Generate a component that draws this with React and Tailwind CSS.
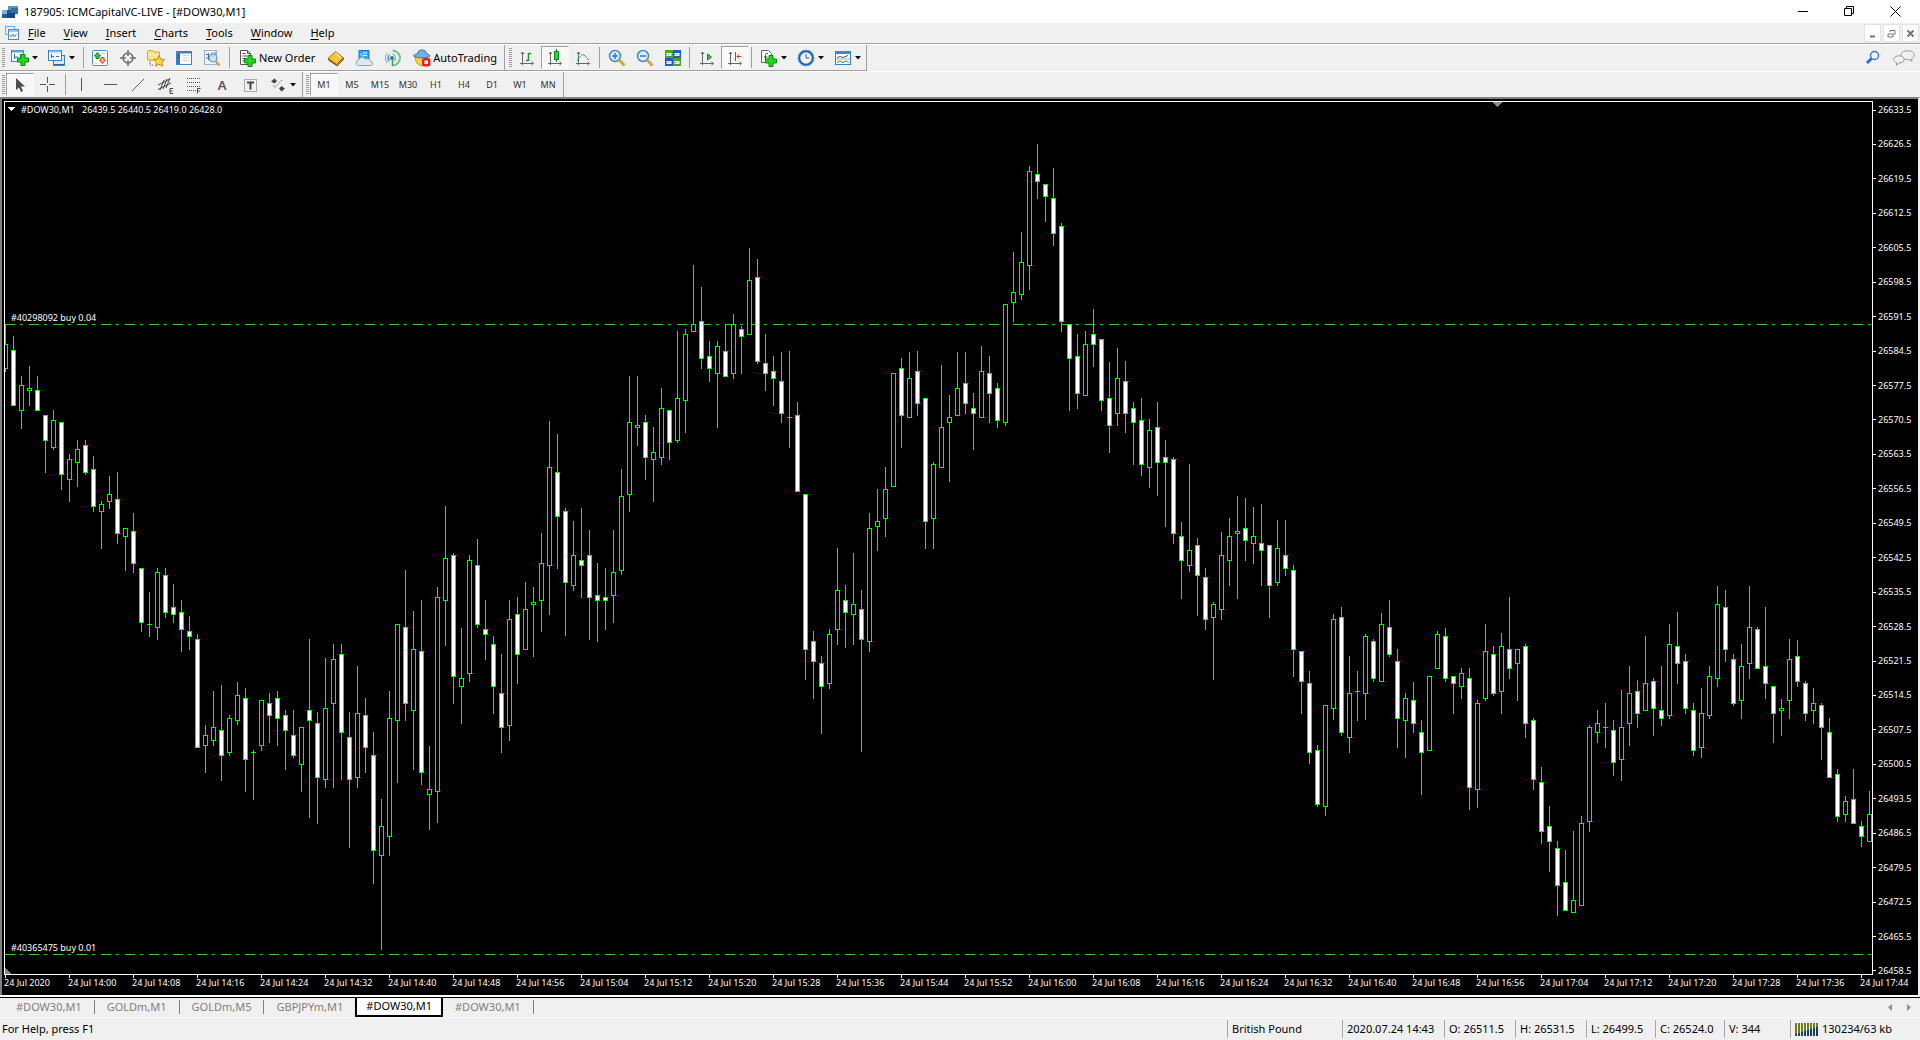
import clsx from 'clsx';

const MENUS = ['File', 'View', 'Insert', 'Charts', 'Tools', 'Window', 'Help'];

const TIMEFRAMES = ['M1', 'M5', 'M15', 'M30', 'H1', 'H4', 'D1', 'W1', 'MN'];

const TABS = ['#DOW30,M1', 'GOLDm,M1', 'GOLDm,M5', 'GBPJPYm,M1', '#DOW30,M1', '#DOW30,M1'];
const ACTIVE_TAB = 4;

const PRICES = Array.from({ length: 26 }, (_, i) => (26633.5 - i * 7).toFixed(1));

// one label every 8 minutes, the first one carries the year
const TIMES = Array.from({ length: 30 }, (_, i) => {
  if (i === 0) return '24 Jul 2020';
  const minutes = 14 * 60 + (i - 1) * 8;
  const mm = String(minutes % 60).padStart(2, '0');
  return `24 Jul ${Math.floor(minutes / 60)}:${mm}`;
});

const ORDERS = [
  { label: '#40298092 buy 0.04', y: 324 },
  { label: '#40365475 buy 0.01', y: 954 }
];

const UP = 0;
const DOWN = 1;

// [direction, high, body top, body bottom, low]
const CANDLES = [
  [UP, 324, 344, 369, 372], [DOWN, 336, 350, 406, 406], [UP, 376, 385, 411, 429],
  [UP, 366, 388, 391, 406], [DOWN, 376, 390, 411, 411], [DOWN, 415, 415, 441, 473],
  [UP, 410, 420, 448, 450], [DOWN, 422, 422, 475, 490], [UP, 454, 459, 480, 502],
  [UP, 440, 449, 463, 487], [DOWN, 440, 445, 473, 475], [DOWN, 456, 469, 507, 512],
  [UP, 501, 504, 512, 549], [UP, 476, 494, 502, 509], [DOWN, 472, 499, 534, 544],
  [UP, 528, 528, 537, 571], [DOWN, 513, 531, 564, 573], [DOWN, 568, 568, 623, 632],
  [UP, 592, 624, 625, 637], [UP, 568, 572, 628, 640], [DOWN, 568, 575, 613, 618],
  [DOWN, 584, 607, 615, 623], [DOWN, 600, 612, 630, 652], [DOWN, 616, 631, 637, 650],
  [DOWN, 634, 639, 748, 748], [UP, 725, 735, 746, 773], [UP, 691, 727, 741, 746],
  [DOWN, 685, 730, 756, 781], [UP, 715, 718, 753, 756], [UP, 682, 695, 721, 725],
  [DOWN, 688, 698, 760, 792], [UP, 750, 752, 753, 800], [UP, 700, 700, 746, 751],
  [DOWN, 693, 703, 716, 743], [DOWN, 691, 698, 719, 746], [DOWN, 710, 715, 731, 770],
  [DOWN, 710, 735, 756, 758], [UP, 727, 727, 765, 792], [DOWN, 639, 710, 721, 818],
  [DOWN, 712, 723, 778, 824], [UP, 658, 708, 780, 788], [UP, 644, 659, 704, 788],
  [DOWN, 644, 654, 733, 780], [DOWN, 712, 737, 780, 848], [UP, 666, 713, 778, 788],
  [DOWN, 698, 715, 748, 773], [DOWN, 732, 755, 851, 884], [UP, 799, 826, 856, 950],
  [UP, 691, 718, 837, 856], [UP, 624, 624, 721, 783], [DOWN, 570, 627, 704, 721],
  [UP, 611, 649, 711, 770], [DOWN, 600, 651, 773, 785], [UP, 746, 789, 795, 830],
  [UP, 587, 597, 792, 823], [UP, 506, 558, 601, 646], [DOWN, 553, 555, 677, 704],
  [UP, 628, 678, 687, 724], [UP, 555, 560, 674, 682], [DOWN, 539, 565, 625, 628],
  [DOWN, 600, 629, 635, 660], [DOWN, 636, 644, 687, 714], [DOWN, 654, 693, 728, 753],
  [UP, 600, 619, 726, 741], [DOWN, 597, 614, 655, 684], [UP, 582, 609, 650, 650],
  [UP, 587, 602, 605, 657], [UP, 533, 563, 601, 632], [UP, 421, 467, 566, 615],
  [DOWN, 434, 472, 517, 569], [DOWN, 508, 511, 583, 636], [UP, 521, 555, 586, 591],
  [DOWN, 508, 560, 566, 598], [DOWN, 530, 555, 598, 640], [DOWN, 563, 595, 601, 642],
  [DOWN, 568, 597, 601, 630], [UP, 530, 572, 596, 623], [UP, 469, 496, 571, 575],
  [UP, 376, 422, 495, 512], [UP, 376, 425, 428, 446], [DOWN, 415, 422, 458, 480],
  [UP, 427, 452, 460, 502], [UP, 388, 408, 458, 465], [DOWN, 410, 410, 443, 460],
  [UP, 331, 398, 441, 443], [UP, 329, 334, 401, 433], [UP, 265, 324, 332, 332],
  [DOWN, 287, 321, 359, 369], [DOWN, 341, 356, 369, 382], [UP, 341, 346, 374, 428],
  [DOWN, 324, 351, 377, 377], [UP, 314, 324, 374, 379], [DOWN, 326, 329, 337, 374],
  [UP, 248, 280, 335, 335], [DOWN, 259, 277, 362, 364], [DOWN, 334, 363, 374, 391],
  [DOWN, 356, 371, 379, 406], [DOWN, 352, 381, 414, 423], [UP, 351, 417, 418, 448],
  [DOWN, 402, 415, 492, 492], [DOWN, 494, 494, 650, 680], [DOWN, 631, 641, 662, 699],
  [DOWN, 656, 663, 687, 734], [UP, 629, 634, 684, 689], [UP, 548, 590, 630, 645],
  [DOWN, 585, 600, 613, 648], [UP, 553, 604, 615, 645], [DOWN, 590, 609, 640, 752],
  [UP, 513, 528, 642, 652], [UP, 489, 521, 527, 551], [UP, 467, 489, 519, 537],
  [UP, 373, 373, 487, 487], [DOWN, 358, 368, 416, 448], [UP, 352, 378, 418, 418],
  [DOWN, 351, 371, 404, 416], [DOWN, 398, 398, 522, 549], [UP, 462, 464, 519, 549],
  [UP, 365, 427, 468, 468], [UP, 395, 417, 423, 482], [UP, 352, 388, 416, 416],
  [DOWN, 352, 383, 404, 414], [DOWN, 393, 408, 414, 450], [UP, 346, 371, 418, 418],
  [DOWN, 356, 373, 394, 423], [DOWN, 383, 388, 421, 428], [UP, 304, 304, 423, 426],
  [UP, 252, 292, 303, 322], [UP, 232, 262, 295, 300], [UP, 166, 171, 266, 290],
  [DOWN, 144, 174, 182, 199], [DOWN, 184, 184, 197, 222], [DOWN, 168, 198, 234, 246],
  [DOWN, 223, 226, 322, 332], [DOWN, 324, 324, 359, 411], [DOWN, 334, 356, 394, 409],
  [UP, 331, 344, 396, 396], [DOWN, 309, 334, 345, 367], [DOWN, 339, 339, 401, 411],
  [DOWN, 362, 398, 426, 453], [UP, 348, 378, 414, 426], [DOWN, 361, 381, 414, 433],
  [DOWN, 402, 408, 423, 465], [DOWN, 398, 420, 465, 476], [UP, 419, 430, 468, 488],
  [DOWN, 402, 427, 463, 496], [DOWN, 440, 457, 463, 527], [DOWN, 457, 459, 534, 544],
  [DOWN, 522, 536, 561, 599], [UP, 464, 550, 566, 572], [DOWN, 538, 545, 576, 616],
  [DOWN, 568, 577, 620, 630], [UP, 602, 604, 618, 680], [UP, 532, 555, 610, 620],
  [UP, 518, 536, 561, 586], [UP, 496, 531, 534, 599], [DOWN, 498, 528, 541, 561],
  [UP, 507, 536, 544, 564], [DOWN, 504, 543, 551, 586], [DOWN, 545, 545, 586, 618],
  [UP, 520, 548, 583, 586], [DOWN, 520, 555, 569, 576], [DOWN, 565, 570, 650, 677],
  [DOWN, 651, 651, 682, 714], [DOWN, 671, 683, 753, 764], [DOWN, 745, 750, 805, 807],
  [UP, 705, 705, 807, 816], [UP, 614, 619, 709, 720], [DOWN, 607, 617, 733, 736],
  [UP, 656, 693, 738, 753], [UP, 671, 691, 692, 721], [UP, 634, 636, 694, 720],
  [DOWN, 639, 641, 679, 682], [UP, 613, 624, 682, 682], [DOWN, 600, 627, 655, 657],
  [DOWN, 649, 661, 719, 748], [UP, 693, 698, 721, 758], [DOWN, 682, 700, 724, 733],
  [DOWN, 720, 732, 753, 795], [UP, 676, 676, 751, 751], [UP, 631, 634, 669, 669],
  [DOWN, 628, 636, 679, 682], [DOWN, 676, 676, 684, 714], [UP, 668, 673, 687, 699],
  [DOWN, 668, 678, 788, 810], [UP, 700, 703, 790, 808], [UP, 624, 651, 699, 701],
  [DOWN, 646, 654, 694, 696], [UP, 633, 646, 692, 714], [DOWN, 597, 649, 669, 679],
  [UP, 649, 649, 664, 701], [DOWN, 644, 646, 724, 738], [DOWN, 718, 720, 780, 790],
  [DOWN, 767, 782, 832, 844], [DOWN, 806, 826, 842, 872], [DOWN, 841, 848, 886, 916],
  [DOWN, 850, 882, 911, 911], [UP, 831, 900, 913, 913], [UP, 816, 823, 906, 906],
  [UP, 725, 727, 822, 832], [UP, 710, 723, 733, 743], [UP, 703, 727, 728, 748],
  [DOWN, 720, 730, 763, 776], [UP, 690, 727, 760, 781], [UP, 666, 693, 724, 746],
  [DOWN, 680, 691, 714, 728], [UP, 636, 683, 711, 711], [DOWN, 678, 681, 709, 736],
  [DOWN, 666, 710, 719, 726], [UP, 624, 644, 716, 719], [DOWN, 612, 646, 664, 684],
  [DOWN, 654, 661, 709, 714], [DOWN, 703, 710, 751, 756], [UP, 688, 713, 748, 758],
  [UP, 666, 676, 716, 719], [UP, 586, 604, 679, 687], [DOWN, 590, 607, 650, 662],
  [DOWN, 654, 659, 704, 706], [UP, 644, 666, 701, 719], [UP, 586, 627, 664, 679],
  [DOWN, 627, 629, 669, 669], [DOWN, 607, 666, 684, 699], [DOWN, 686, 686, 714, 743],
  [UP, 699, 708, 711, 736], [UP, 639, 659, 701, 719], [DOWN, 640, 656, 682, 687],
  [DOWN, 681, 683, 714, 721], [UP, 688, 703, 711, 724], [DOWN, 703, 705, 728, 760],
  [DOWN, 718, 732, 778, 778], [DOWN, 769, 774, 817, 822], [UP, 796, 801, 815, 822],
  [DOWN, 769, 799, 824, 824], [DOWN, 821, 826, 837, 847], [UP, 791, 814, 842, 842]
];

function Svg({ children, size = 18 }) {
  return (
    <svg width={size} height={size} viewBox={`0 0 ${size} ${size}`} fill="none" className="shrink-0">
      {children}
    </svg>
  );
}

function GreenPlus({ x, y }) {
  return (
    <path
      d="M4 0.5h4v3.5h3.5v4H8v3.5H4V8H0.5V4H4z"
      transform={`translate(${x} ${y})`}
      fill="#1fd81f"
      stroke="#0a8a0a"
    />
  );
}

function Axes() {
  return (
    <path d="M4.5 3v13M3 5l1.500-2 1.500 2M2 14.500h13M13.500 13l2 1.500-2 1.500" stroke="#666" />
  );
}

const icons = {
  newChart: (
    <Svg>
      <rect x="0.5" y="1.5" width="12" height="11" fill="#f4f9ff" stroke="#4a86c5" />
      <path d="M1 2.5h11" stroke="#6aa2dc" strokeWidth="2" />
      <path d="M3.5 5v5M3 8h4M9.5 5v4" stroke="#3b70a8" />
      <GreenPlus x={6} y={5} />
    </Svg>
  ),
  profiles: (
    <Svg>
      <rect x="5.5" y="6.5" width="11" height="10" fill="#d7e9fb" stroke="#3c7fc4" />
      <path d="M6 15.500h10" stroke="#2c68a8" />
      <rect x="0.5" y="1.5" width="13" height="10" fill="#f4f9ff" stroke="#3c7fc4" />
      <path d="M1 2.5h12" stroke="#8cbdec" strokeWidth="2" />
      <path d="M3.500 5v4M3 7.500h3M8 7.500h3" stroke="#3b70a8" />
    </Svg>
  ),
  marketWatch: (
    <Svg>
      <rect x="1.500" y="1.500" width="15" height="15" rx="1" fill="#fff" stroke="#4e8fd0" />
      <path d="M11 4.500h3M4 14.500h2" stroke="#a9c9e8" />
      <path d="M6.500 3.500l3 3.500H8v2.500H5V7H3.500z" fill="#2fd23a" stroke="#0c8a14" />
      <path d="M11.500 14.500l-3-3.500H10V8.500h3V11h1.500z" fill="#ffb28a" stroke="#e0430e" />
    </Svg>
  ),
  crosshair: (
    <Svg>
      <circle cx="9" cy="9" r="5" stroke="#6e6e6e" strokeWidth="1.500" />
      <path d="M9 1v6M9 11v6M1 9h6M11 9h6" stroke="#6e6e6e" strokeWidth="1.500" />
    </Svg>
  ),
  navigator: (
    <Svg>
      <path d="M0.500 11V3l1-1.500h4L7 3h5.500v8z" fill="#fbe28a" stroke="#d9a62a" />
      <path d="M1 6h11" stroke="#fff3bf" />
      <path d="M3 12v4M3 16h4" stroke="#555" strokeDasharray="1 1" />
      <path d="M12 6.500l1.700 3.700 3.800.4-2.800 2.700.8 3.900-3.500-2-3.500 2 .8-3.900-2.800-2.700 3.800-.4z" fill="#ffd84a" stroke="#c98d12" />
    </Svg>
  ),
  terminal: (
    <Svg>
      <rect x="1.500" y="2.500" width="15" height="13" fill="#fff" stroke="#3f7fc9" />
      <path d="M1 3.500h16" stroke="#3f7fc9" strokeWidth="2" />
      <rect x="2" y="4" width="3" height="11" fill="#3a76c8" />
      <path d="M7.500 6.500h7M7.500 9h7M7.500 11.500h7" stroke="#cfd9e6" />
      <path d="M3.500 5.500v1M3.500 8v1" stroke="#16345f" />
    </Svg>
  ),
  tester: (
    <Svg>
      <rect x="1.500" y="1.500" width="12" height="14" fill="#edf4fb" stroke="#9ab4cd" />
      <path d="M3 5.500h2.500v3.500H3M5.500 11V4M9 3.500v5M12 3v3" stroke="#4c7197" />
      <circle cx="10" cy="9" r="4" fill="#bfe0fa" fillOpacity="0.8" stroke="#5b93c8" />
      <path d="M13 12.500l3.500 4" stroke="#dba436" strokeWidth="2.500" />
    </Svg>
  ),
  newOrder: (
    <Svg>
      <path d="M1.500 1.500h7l3 3v11h-10z" fill="#fff" stroke="#555" />
      <path d="M8.500 1.500v3h3M3.500 4.500h3M3.500 7h5M3.500 9.500h4M3.500 12h3" stroke="#555" />
      <GreenPlus x={5} y={6} />
    </Svg>
  ),
  book: (
    <Svg>
      <path d="M1 9.500L8.500 2.500l8 6.500-7 6.500z" fill="#f4c542" stroke="#a9700f" />
      <path d="M1 9.500l1 2 8 5.500 6.500-6.500V9l-7 6.500z" fill="#d99a25" stroke="#8f5d0b" />
      <path d="M8.500 4l5 4.500" stroke="#fff2b3" strokeWidth="1.500" />
    </Svg>
  ),
  server: (
    <Svg>
      <path d="M4 1.500h10V10H4z" fill="#36a7f5" stroke="#1c75bf" />
      <path d="M5.500 4.500l2 3M8 4h4M8 6.500h4" stroke="#eaf7ff" />
      <path d="M3.500 16.500a2.800 2.800 0 010-5.500 4 4 0 017-1 3.500 3.500 0 015 2.500 2 2 0 010 4z" fill="#dfe7f2" stroke="#8aa0c0" />
    </Svg>
  ),
  signals: (
    <Svg>
      <circle cx="9" cy="9" r="7.500" fill="#e6eff0" />
      <path d="M4.500 14a7 7 0 010-10" stroke="#9dbfd0" strokeWidth="1.500" />
      <path d="M6.500 12a4 4 0 010-6" stroke="#4d8fc4" strokeWidth="1.500" />
      <path d="M9.500 1.500a7 7 0 010 15" stroke="#7cc08a" strokeWidth="2" />
      <path d="M9.500 5a4 4 0 011.500 7" stroke="#8cc79a" strokeWidth="1.500" />
      <circle cx="9" cy="9" r="2" fill="#2f78c0" />
      <path d="M9.500 10v7" stroke="#3da24a" strokeWidth="1.500" />
    </Svg>
  ),
  autoTrading: (
    <Svg>
      <path d="M2 8h13l-1.500 6-5 3-5-3z" fill="#f7cf4d" stroke="#c79a1e" />
      <path d="M0.500 7c1-2 3-2 4-2 .5-3 2-4 4.500-4s4 1 4.500 4c1 0 2.500 0 3.500 2-3 2.500-13 2.500-16.500 0z" fill="#6db4ea" stroke="#2d76b5" />
      <rect x="9" y="9" width="8.500" height="8.500" rx="2.500" fill="#e3241b" />
      <rect x="11.500" y="11.500" width="3.500" height="3.500" fill="#fff" />
    </Svg>
  ),
  bars: (
    <Svg>
      <Axes />
      <path d="M8 11.500h2.500M10.500 12V4M10.500 4.500H13" stroke="#1a9a2a" strokeWidth="1.500" />
    </Svg>
  ),
  candles: (
    <Svg>
      <Axes />
      <path d="M10.500 0v13" stroke="#0b8a1c" />
      <rect x="8.500" y="2.500" width="4" height="8" fill="#2fd24a" stroke="#0b8a1c" />
    </Svg>
  ),
  line: (
    <Svg>
      <Axes />
      <path d="M3 12c3-5 5-7 7-6s3 3.500 5 5" stroke="#2fa83f" />
    </Svg>
  ),
  zoomIn: (
    <Svg>
      <circle cx="7" cy="7" r="5.500" fill="#d9effc" stroke="#3f87c9" strokeWidth="1.500" />
      <path d="M4 7h6M7 4v6" stroke="#2f77bd" strokeWidth="1.500" />
      <path d="M11 11l5.500 5.500" stroke="#d9a431" strokeWidth="3" />
    </Svg>
  ),
  zoomOut: (
    <Svg>
      <circle cx="7" cy="7" r="5.500" fill="#d9effc" stroke="#3f87c9" strokeWidth="1.500" />
      <path d="M4 7h6" stroke="#2f77bd" strokeWidth="1.500" />
      <path d="M11 11l5.500 5.500" stroke="#d9a431" strokeWidth="3" />
    </Svg>
  ),
  tile: (
    <Svg>
      <rect x="1" y="1" width="8" height="8" fill="#4fa51c" />
      <rect x="9" y="1" width="8" height="8" fill="#2458cf" />
      <rect x="1" y="9" width="8" height="8" fill="#2458cf" />
      <rect x="9" y="9" width="8" height="8" fill="#4fa51c" />
      <path d="M2.500 5.500h5M10.500 5.500h5M2.500 13.500h5M10.500 13.500h5" stroke="#f3f8ff" strokeWidth="3" />
      <path d="M3 5.500h3M11 5.500h3M3 13.500h3M11 13.500h3" stroke="#9cc0e8" />
    </Svg>
  ),
  autoScroll: (
    <Svg>
      <Axes />
      <path d="M9.500 5v6l4-3z" fill="#38c84a" stroke="#128a22" />
    </Svg>
  ),
  chartShift: (
    <Svg>
      <Axes />
      <path d="M9.500 3v9" stroke="#2b6cab" />
      <path d="M15 7.500h-4M13 5.500l-2 2 2 2" stroke="#c8401a" />
    </Svg>
  ),
  indicators: (
    <Svg>
      <path d="M1.500 1.500h7l3 3v9h-10z" fill="#fff" stroke="#666" />
      <path d="M8 4.500c-2-.8-2.500.5-2.500 2v5M4 8h3.500" stroke="#444" />
      <GreenPlus x={5} y={6} />
    </Svg>
  ),
  clock: (
    <Svg>
      <circle cx="9" cy="9" r="7" fill="#eef6fd" stroke="#1b62b5" strokeWidth="2.500" />
      <circle cx="9" cy="9" r="7.800" stroke="#5fa6ea" strokeWidth="0.800" />
      <path d="M9 5v4h3.500" stroke="#555" />
    </Svg>
  ),
  templates: (
    <Svg>
      <rect x="1.500" y="2.500" width="15" height="13" fill="#fff" stroke="#3c7cc4" />
      <path d="M1 3.500h16" stroke="#3c86d6" strokeWidth="3" />
      <path d="M3 8.500l3-1 3 1 5-2" stroke="#a23a22" />
      <path d="M3 13.500l3-1.500 3 1.500 3-1.500 3 1.500" stroke="#2d9a3a" />
      <path d="M2 10h14" stroke="#8ab2db" />
    </Svg>
  ),
  cursor: (
    <Svg>
      <path d="M5 2v12l3-2.500 2 4.500 2-1-2-4.500h4z" fill="#4c4c4c" />
    </Svg>
  ),
  cross: (
    <Svg>
      <path d="M8.500 1v6M8.500 10v6M1 8.500h6M10 8.500h6" stroke="#555" />
    </Svg>
  ),
  vline: (
    <Svg>
      <path d="M8.500 2v13" stroke="#555" />
    </Svg>
  ),
  hline: (
    <Svg>
      <path d="M3 8.500h13" stroke="#555" />
    </Svg>
  ),
  trend: (
    <Svg>
      <path d="M3 15L15 3" stroke="#666" />
    </Svg>
  ),
  channel: (
    <Svg>
      <path d="M1 9l12-6M1 13.500L14 7M3 14l4-10M6 13l4-10M9 12l4-10" stroke="#444" />
      <path d="M16 12.500h-3v5h3M13 15h2.500" stroke="#444" />
    </Svg>
  ),
  fibo: (
    <Svg>
      <path d="M2 2.500h14M2 6.500h14M2 10.500h14M2 14.500h9" stroke="#555" strokeDasharray="1 1" />
      <path d="M12.500 17.500v-5h3M12.500 15h2.500" stroke="#444" />
    </Svg>
  ),
  label: (
    <Svg>
      <rect x="3.500" y="3.500" width="12" height="12" stroke="#666" strokeDasharray="1 1" />
      <path d="M6 6.500h7M9.500 6.500v7" stroke="#444" strokeWidth="2" />
    </Svg>
  ),
  arrows: (
    <Svg>
      <path d="M2 5.500L5.500 2.500 8 5 5.500 7.500zM10 12.500l2.500-2.500 3.500 2.500-3.500 3z" fill="#444" />
      <path d="M4 9l2 2.500L13 4" stroke="#777" strokeDasharray="2 1" />
    </Svg>
  )
};

function Caret() {
  return (
    <svg width="6" height="4" viewBox="0 0 6 4" className="shrink-0">
      <path d="M0 0h6L3 3.500z" fill="#111" />
    </svg>
  );
}

function Grip() {
  return (
    <span className="ml-[2px] mr-px h-[19px] w-[3px] shrink-0 bg-[repeating-linear-gradient(#a0a0a0_0_1px,#f0f0f0_1px_2px)]" />
  );
}

function Separator() {
  return (
    <span className="flex w-[6px] shrink-0 justify-center">
      <span className="h-[21px] w-px bg-[#a0a0a0]" />
    </span>
  );
}

function ToolButton({ icon, title, pressed }) {
  return (
    <button
      type="button"
      title={title}
      aria-label={title}
      aria-pressed={pressed}
      className={clsx(
        'flex h-[23px] w-[28px] shrink-0 items-center justify-center border',
        pressed
          ? 'border-[#f8f8f8] border-l-[#a0a0a0] border-t-[#a0a0a0] bg-[#f8f8f8]'
          : 'border-transparent'
      )}
    >
      {icons[icon]}
    </button>
  );
}

function DropButton({ icon, title }) {
  return (
    <button
      type="button"
      title={title}
      aria-label={title}
      className="flex h-[23px] w-[37px] shrink-0 items-center gap-[3px] pl-[5px]"
    >
      {icons[icon]}
      <Caret />
    </button>
  );
}

function TextButton({ icon, children }) {
  return (
    <button type="button" className="flex h-[23px] shrink-0 items-center gap-[2px] px-[7px] text-[11px] leading-4 text-black">
      {icons[icon]}
      <span className="whitespace-nowrap">{children}</span>
    </button>
  );
}

function TitleBar() {
  return (
    <header className="flex h-[23px] shrink-0 items-center bg-white pl-[2px] text-[11px]">
      <svg width="17" height="16" viewBox="0 0 17 16" className="shrink-0">
        <path d="M6 2h10v8H6z" fill="#5b93c3" />
        <path d="M9 4h7v6H9z" fill="#2f6fa8" />
        <path d="M0 6h9v8H0z" fill="#1f5f9c" />
        <path d="M0 6h5v4H0z" fill="#7fb2da" />
        <path d="M5 9h8v5H5z" fill="#164a80" />
      </svg>
      <h1 className="ml-[5px] whitespace-nowrap leading-4 text-black">
        187905: ICMCapitalVC-LIVE - [#DOW30,M1]
      </h1>
      <div className="ml-auto flex h-full pr-[2px]">
        <button type="button" aria-label="Minimize" className="flex w-[46px] items-center justify-center">
          <svg width="11" height="11" viewBox="0 0 11 11"><path d="M0 5.500h10" stroke="#000" /></svg>
        </button>
        <button type="button" aria-label="Restore" className="flex w-[46px] items-center justify-center">
          <svg width="11" height="11" viewBox="0 0 11 11" fill="none">
            <path d="M0.500 2.500h7v7h-7zM2.500 2.500v-2h7v7h-2" stroke="#000" />
          </svg>
        </button>
        <button type="button" aria-label="Close" className="flex w-[46px] items-center justify-center">
          <svg width="11" height="11" viewBox="0 0 11 11"><path d="M0.500 0.500l10 10M10.500 0.500l-10 10" stroke="#000" /></svg>
        </button>
      </div>
    </header>
  );
}

function WindowButton({ label, children }) {
  return (
    <button type="button" aria-label={label} className="flex h-[18px] w-[17px] items-center justify-center border border-[#e2e2e2] bg-white">
      <svg width="9" height="9" viewBox="0 0 9 9" fill="none">{children}</svg>
    </button>
  );
}

function MenuBar() {
  return (
    <nav className="flex h-[21px] shrink-0 items-center border-b border-[#a0a0a0] pl-[5px] pr-px text-[11px]">
      <svg width="14" height="14" viewBox="0 0 14 14" fill="none" className="shrink-0">
        <rect x="0.500" y="0.500" width="9" height="8" fill="#e8f2ff" stroke="#7aa7e0" />
        <rect x="3.500" y="3.500" width="10" height="10" fill="#fff" stroke="#4a86d8" />
        <path d="M4 5h9" stroke="#4a86d8" />
        <path d="M5 9l1.500 2 1.500-3 1.500 3 2-3" stroke="#4a86d8" />
      </svg>
      {MENUS.map((name) => (
        <button key={name} type="button" className="pl-[9px] pr-[9px] leading-4 text-black">
          <span className="underline underline-offset-2">{name[0]}</span>
          {name.slice(1)}
        </button>
      ))}
      <div className="ml-auto flex gap-[2px]">
        <WindowButton label="Minimize chart">
          <path d="M2 7.500h5" stroke="#68798c" strokeWidth="2" />
        </WindowButton>
        <WindowButton label="Restore chart">
          <path d="M1 5h5v3H1zM3 3V1.500h5V5H6.500" stroke="#68798c" />
        </WindowButton>
        <WindowButton label="Close chart">
          <path d="M1.500 1.500l6 6M7.500 1.500l-6 6" stroke="#68798c" strokeWidth="2" />
        </WindowButton>
      </div>
    </nav>
  );
}

function MainToolbar() {
  return (
    <div className="flex h-[27px] shrink-0 border-t border-white">
      <div className="flex items-center border-b border-r border-[#a0a0a0]">
        <Grip />
        <DropButton icon="newChart" title="New Chart" />
        <DropButton icon="profiles" title="Profiles" />
        <Separator />
        <ToolButton icon="marketWatch" title="Market Watch" />
        <ToolButton icon="crosshair" title="Data Window" />
        <ToolButton icon="navigator" title="Navigator" />
        <ToolButton icon="terminal" title="Terminal" />
        <ToolButton icon="tester" title="Strategy Tester" />
        <Separator />
        <TextButton icon="newOrder">New Order</TextButton>
        <ToolButton icon="book" title="MetaEditor" />
        <ToolButton icon="server" title="Virtual Hosting" />
        <ToolButton icon="signals" title="Signals" />
        <TextButton icon="autoTrading">AutoTrading</TextButton>
      </div>
      <div className="flex items-center border-b border-r border-[#a0a0a0] pl-[2px]">
        <Grip />
        <ToolButton icon="bars" title="Bar Chart" />
        <ToolButton icon="candles" title="Candlesticks" pressed />
        <ToolButton icon="line" title="Line Chart" />
        <Separator />
        <ToolButton icon="zoomIn" title="Zoom In" />
        <ToolButton icon="zoomOut" title="Zoom Out" />
        <ToolButton icon="tile" title="Tile Windows" />
        <Separator />
        <ToolButton icon="autoScroll" title="Auto Scroll" />
        <ToolButton icon="chartShift" title="Chart Shift" pressed />
        <Separator />
        <DropButton icon="indicators" title="Indicators" />
        <DropButton icon="clock" title="Periods" />
        <DropButton icon="templates" title="Templates" />
      </div>
      <div className="ml-auto flex items-center gap-[12px] pr-[5px]">
        <button type="button" aria-label="Search">
          <svg width="16" height="16" viewBox="0 0 16 16" fill="none">
            <circle cx="9.500" cy="5.500" r="4" fill="#f4f9ff" stroke="#3f76dd" strokeWidth="1.500" />
            <path d="M6.500 8.500L2 13" stroke="#3468d0" strokeWidth="3" />
          </svg>
        </button>
        <button type="button" aria-label="Chat">
          <svg width="22" height="16" viewBox="0 0 22 16" fill="none">
            <path d="M14.500 0.800c4 0 6.700 1.800 6.700 4.400 0 1.600-1 3-2.700 3.700l.5 2.600-3-2c-4.500.5-8-1.300-8-4.300 0-2.600 2.600-4.400 6.500-4.400z" fill="#f0f0f2" stroke="#98989e" />
            <path d="M6 5.800c3 0 5.200 1.500 5.200 3.700S9 13 6 13l-2.500 2.200v-2.700C1.700 12 .8 10.800.8 9.500.8 7.300 3 5.800 6 5.800z" fill="#f4f4f6" stroke="#98989e" />
          </svg>
        </button>
      </div>
    </div>
  );
}

function DrawingToolbar() {
  return (
    <div className="flex h-[26px] shrink-0 border-t border-white">
      <div className="flex items-center border-r border-[#a0a0a0] pr-px">
        <Grip />
        <ToolButton icon="cursor" title="Cursor" pressed />
        <ToolButton icon="cross" title="Crosshair" />
        <Separator />
        <ToolButton icon="vline" title="Vertical Line" />
        <ToolButton icon="hline" title="Horizontal Line" />
        <ToolButton icon="trend" title="Trendline" />
        <ToolButton icon="channel" title="Equidistant Channel" />
        <ToolButton icon="fibo" title="Fibonacci Retracement" />
        <button type="button" title="Text" className="flex h-[23px] w-[28px] items-center justify-center text-[13px] font-semibold leading-4 text-[#555]">
          A
        </button>
        <ToolButton icon="label" title="Text Label" />
        <DropButton icon="arrows" title="Arrows" />
      </div>
      <div className="flex items-center border-r border-[#a0a0a0] pl-px pr-px">
        <Grip />
        {TIMEFRAMES.map((tf, i) => (
          <button
            key={tf}
            type="button"
            aria-pressed={i === 0}
            className={clsx(
              'flex h-[23px] w-[28px] items-center justify-center border text-[9px] leading-4 text-[#333]',
              i === 0
                ? 'border-[#f8f8f8] border-l-[#a0a0a0] border-t-[#a0a0a0] bg-[#f8f8f8]'
                : 'border-transparent'
            )}
          >
            {tf}
          </button>
        ))}
      </div>
    </div>
  );
}

function Candle({ x, data }) {
  const [direction, high, top, bottom, low] = data;

  return (
    <g>
      <rect x={x} y={high} width="1" height={low - high} fill="#00ff00" />
      <rect x={x - 2} y={top} width="5" height={bottom - top} fill="#00ff00" />
      {bottom - top > 2 ? (
        <rect
          x={x - 1}
          y={top + 1}
          width="3"
          height={bottom - top - 2}
          fill={direction === DOWN ? '#ffffff' : '#000000'}
        />
      ) : null}
    </g>
  );
}

function Chart() {
  return (
    <svg
      viewBox="5 102 1867 872"
      preserveAspectRatio="none"
      shapeRendering="crispEdges"
      className="block h-full w-full"
      role="img"
      aria-label="#DOW30 one minute candlesticks"
    >
      {ORDERS.map((order) => (
        <line
          key={order.label}
          x1="5"
          x2="1872"
          y1={order.y + 0.5}
          y2={order.y + 0.5}
          stroke="#32cd32"
          strokeDasharray="10 5 3 6"
        />
      ))}
      {CANDLES.map((candle, i) => (
        <Candle key={i} x={5 + i * 8} data={candle} />
      ))}
      <path d="M1492 102h10l-5 5z" fill="#8c8c8c" />
      <path d="M5 968v6h6z" fill="#778899" />
      <g fill="#ffffff" fontSize="9" fontFamily="'Noto Sans', 'Open Sans', sans-serif">
        <path d="M8 107h7l-3.500 4z" />
        <text x="21" y="113">#DOW30,M1</text>
        <text x="82" y="113">26439.5 26440.5 26419.0 26428.0</text>
        {ORDERS.map((order) => (
          <text key={order.label} x="11" y={order.y - 3}>{order.label}</text>
        ))}
      </g>
    </svg>
  );
}

function ChartWindow() {
  return (
    <main className="flex min-h-0 flex-1 overflow-hidden border-x-2 border-t-2 border-[#808080] border-r-[#f0f0f0] bg-black pl-[2px] text-[9px] text-white">
      <div className="flex min-w-0 flex-1 flex-col pt-[2px]">
        <div className="min-h-0 flex-1 border border-white">
          <Chart />
        </div>
        <div className="flex h-[20px] shrink-0">
          {TIMES.map((time) => (
            <div key={time} className="w-16 shrink-0">
              <div className="ml-px h-[3px] w-px bg-white" />
              <div className="whitespace-nowrap leading-[10px]">{time}</div>
            </div>
          ))}
        </div>
      </div>
      <div className="flex w-[45px] shrink-0 flex-col justify-between pb-[18px] pt-[5px]">
        {PRICES.map((price) => (
          <div key={price} className="flex h-3 items-center gap-[2px] leading-3">
            <span className="h-px w-[3px] bg-white" />
            {price}
          </div>
        ))}
      </div>
    </main>
  );
}

function ChartTabs() {
  return (
    <div className="shrink-0 border-t-2 border-white">
      <div className="flex h-[20px] items-start border-t border-black pl-[4px] text-[11px]">
        {TABS.map((tab, i) => (
          <button
            key={i}
            type="button"
            className={clsx(
              'flex items-center whitespace-nowrap',
              i === ACTIVE_TAB
                ? 'h-[19px] border-2 border-t-0 border-black bg-white px-[9px] text-black'
                : 'h-[18px] text-[#808080]'
            )}
          >
            {i === ACTIVE_TAB ? (
              tab
            ) : (
              <>
                <span className="px-[12px] leading-4">{tab}</span>
                {i === ACTIVE_TAB - 1 ? null : <span className="h-[14px] w-px bg-[#808080]" />}
              </>
            )}
          </button>
        ))}
        <div className="ml-auto flex gap-[13px] self-center pr-[9px]">
          <button type="button" aria-label="Scroll tabs left">
            <svg width="5" height="7" viewBox="0 0 5 7"><path d="M4 0v7L0 3.500z" fill="#909090" /></svg>
          </button>
          <button type="button" aria-label="Scroll tabs right">
            <svg width="5" height="7" viewBox="0 0 5 7"><path d="M1 0v7l4-3.500z" fill="#909090" /></svg>
          </button>
        </div>
      </div>
    </div>
  );
}

function StatusCell({ children, className }) {
  return (
    <div className={clsx('flex h-[18px] shrink-0 items-center whitespace-nowrap border-l border-[#a8a8a8] pl-[4px]', className)}>
      {children}
    </div>
  );
}

function StatusBar() {
  return (
    <footer className="flex h-[23px] shrink-0 items-center border-t border-white text-[11px] text-black">
      <p className="pl-[2px] leading-4">For Help, press F1</p>
      <div className="ml-auto flex">
        <StatusCell className="w-[115px]">British Pound</StatusCell>
        <StatusCell className="w-[102px]">2020.07.24 14:43</StatusCell>
        <StatusCell className="w-[71px]">O: 26511.5</StatusCell>
        <StatusCell className="w-[71px]">H: 26531.5</StatusCell>
        <StatusCell className="w-[69px]">L: 26499.5</StatusCell>
        <StatusCell className="w-[69px]">C: 26524.0</StatusCell>
        <StatusCell className="w-[66px]">V: 344</StatusCell>
        <StatusCell className="w-[130px] gap-[4px]">
          <svg width="23" height="13" viewBox="0 0 23 13" shapeRendering="crispEdges">
            {[11, 10, 9, 8, 7, 6, 5, 4].map((top, i) => (
              <g key={i}>
                <rect x={i * 3} y="0" width="2" height={top} fill="#6b7d1e" />
                <rect x={i * 3} y={top} width="2" height={13 - top} fill="#17405f" />
              </g>
            ))}
          </svg>
          130234/63 kb
        </StatusCell>
      </div>
    </footer>
  );
}

export default function App() {
  return (
    <div className="flex h-screen flex-col overflow-hidden bg-[#f0f0f0] font-['Noto_Sans','Open_Sans',sans-serif]">
      <TitleBar />
      <MenuBar />
      <MainToolbar />
      <DrawingToolbar />
      <ChartWindow />
      <ChartTabs />
      <StatusBar />
    </div>
  );
}
